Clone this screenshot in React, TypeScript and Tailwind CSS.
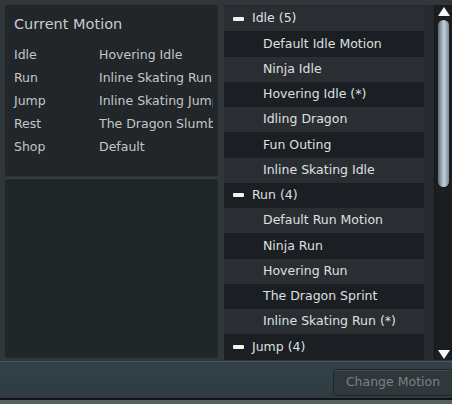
import React from "react";

const current: [string, string][] = [
  ["Idle", "Hovering Idle"],
  ["Run", "Inline Skating Run"],
  ["Jump", "Inline Skating Jump"],
  ["Rest", "The Dragon Slumber"],
  ["Shop", "Default"],
];

type Row = { text: string; header?: boolean };
const rows: Row[] = [
  { text: "Idle (5)", header: true },
  { text: "Default Idle Motion" },
  { text: "Ninja Idle" },
  { text: "Hovering Idle (*)" },
  { text: "Idling Dragon" },
  { text: "Fun Outing" },
  { text: "Inline Skating Idle" },
  { text: "Run (4)", header: true },
  { text: "Default Run Motion" },
  { text: "Ninja Run" },
  { text: "Hovering Run" },
  { text: "The Dragon Sprint" },
  { text: "Inline Skating Run (*)" },
  { text: "Jump (4)", header: true },
];

export default function App() {
  return (
    <div
      className="w-[452px] h-[404px] bg-[#30363a] flex flex-col overflow-hidden text-[12.5px]"
      style={{ fontFamily: '"DejaVu Sans", Verdana, sans-serif' }}
    >
      <div className="flex h-[361px] pt-[4px] pl-[5px]">
        {/* left column */}
        <div className="w-[213px] flex flex-col gap-[2px]">
          <div className="h-[172px] rounded-[3px] bg-[#222629] border-t border-[#2c3236] pl-[9px] pt-[9px] overflow-hidden">
            <div className="text-[14.5px] leading-[20px] text-[#c9cccd]">Current Motion</div>
            <div className="mt-[9px] flex flex-col">
              {current.map(([k, v]) => (
                <div key={k} className="flex h-[23px] items-center leading-[16px] text-[#c3c7c8] whitespace-nowrap">
                  <div className="w-[85px] shrink-0">{k}</div>
                  <div className="overflow-hidden w-[114px]">{v}</div>
                </div>
              ))}
            </div>
          </div>
          <div className="h-[180px] rounded-[3px] bg-[#212628] border-t border-[#3a4145]" />
        </div>
        {/* list */}
        <div className="ml-[6px] flex h-[355px] mt-[1px]">
          <div className="w-[210px] bg-[#26292d] flex flex-col overflow-hidden pt-[1px]">
            {rows.map((r, i) => (
              <div
                key={i}
                className={
                  "h-[25.25px] shrink-0 w-[200px] flex items-center whitespace-nowrap text-[#dfe0e0] " +
                  (i % 2 === 0 ? "bg-[#2a2e32]" : "bg-[#1b1e22]")
                }
              >
                {r.header ? (
                  <>
                    <span className="ml-[9px] w-[11px] h-[4px] rounded-[1px] bg-[#f2f2f2]" />
                    <span className="ml-[8px]">{r.text}</span>
                  </>
                ) : (
                  <span className="ml-[39px]">{r.text}</span>
                )}
              </div>
            ))}
          </div>
          <div className="w-[18px] bg-[#1b1e21] border-l border-[#15181a] flex flex-col items-center relative">
            <svg width="12" height="10" viewBox="0 0 12 10" className="mt-[2px]">
              <path d="M6 0 L12 9 L0 9 Z" fill="#f4f6f8" />
            </svg>
            <div
              className="mt-[3px] w-[11px] h-[167px] rounded-[6px]"
              style={{ background: "linear-gradient(to right,#5e6a78,#a9b6c4 40%,#c4ced8 55%,#7d8a99)" }}
            />
            <div className="flex-1" />
            <svg width="12" height="10" viewBox="0 0 12 10" className="mb-[1px]">
              <path d="M0 1 L12 1 L6 10 Z" fill="#f4f6f8" />
            </svg>
          </div>
        </div>
      </div>
      {/* bottom bar */}
      <div
        className="h-[37px] border-t border-[#4a545a] flex items-start pt-[7px]"
        style={{ background: "linear-gradient(to bottom,#33424a,#2d3b41)" }}
      >
        <div className="ml-auto mr-[-1px] w-[120px] h-[27px] rounded-[3px] border border-[#20272b] bg-[#30383c] flex items-center justify-center text-[#7b8284] shadow-[inset_0_1px_0_#41494d]">
          Change Motion
        </div>
      </div>
      <div className="h-[2px] bg-[#121517]" />
      <div className="flex-1 bg-[#596064]" />
    </div>
  );
}
